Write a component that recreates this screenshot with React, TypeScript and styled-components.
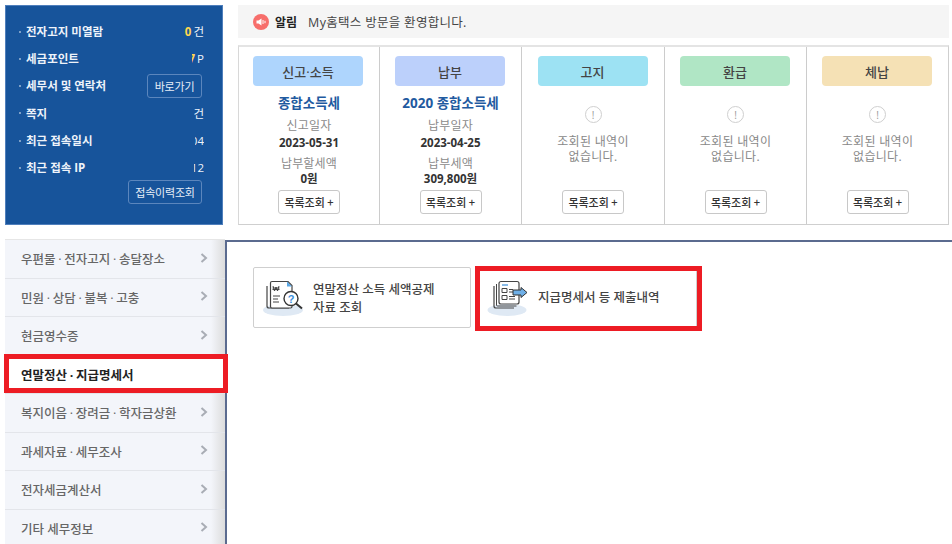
import React from 'react';
import styled, { createGlobalStyle } from 'styled-components';

const FONT = `"Open Sans", "Noto Sans CJK KR", "Noto Sans", sans-serif`;

const Global = createGlobalStyle`
  html, body { margin: 0; padding: 0; background: #fff; overflow: hidden; }
  body { font-family: ${FONT}; font-size: 12px; color: #333; }
  *, *::before, *::after { box-sizing: border-box; }
`;

const Page = styled.div`
  width: 952px; height: 544px; overflow: hidden;
  display: flex; flex-direction: column; gap: 14px; padding: 5px 0 0 5px;
`;
const TopRow = styled.div`display: flex; gap: 15px; height: 221px; flex: none;`;

const InfoPanel = styled.div`
  width: 218px; height: 220px; background: #17549b; border: 1px solid #4f7fbc;
  padding: 12px 14px 0 13px; display: flex; flex-direction: column; color: #eef3fa;
`;
const InfoRow = styled.div`
  height: 27.3px; display: flex; align-items: center; justify-content: space-between;
  font-size: 11.5px; font-weight: 700; line-height: 16px; flex: none;
`;
const InfoLabel = styled.span`
  white-space: nowrap;
  &::before {
    content: ''; display: inline-block; width: 2px; height: 2px; border-radius: 50%;
    background: rgba(255, 255, 255, .6); vertical-align: middle; margin: 0 5px 2px 0;
  }
`;
const InfoValue = styled.span<{ $w: number }>`
  width: ${p => p.$w}px; overflow: hidden; display: flex; justify-content: flex-end;
  white-space: nowrap; font-weight: 400; margin-right: 4px;
`;
const Gold = styled.b`color: #ffd84f; margin-right: 2px;`;
const GhostBtn = styled.button<{ $w: number }>`
  font: 400 11px ${FONT}; color: #e8eef7; background: transparent; letter-spacing: -.2px;
  border: 1px solid #5b86bd; border-radius: 3px; height: 24px; padding: 0;
  width: ${p => p.$w}px; margin-right: 6px; flex: none;
`;
const HistoryRow = styled.div`display: flex; justify-content: flex-end; margin-top: -2px;`;

const RightCol = styled.div`width: 711px; display: flex; flex-direction: column; gap: 7px;`;
const Notice = styled.div`
  height: 33px; background: #f5f5f5; display: flex; align-items: center; padding-left: 15px; gap: 6px;
  font-size: 12.5px; color: #444; letter-spacing: .3px;
`;
const NoticeStrong = styled.b`color: #222; margin-right: 5px; font-size: 12px; letter-spacing: 0;`;

const Tag = styled.div<{ $bg: string }>`
  width: 110px; height: 30px; border-radius: 4px; background: ${p => p.$bg}; margin-right: 1px;
  display: flex; align-items: center; justify-content: center;
  font-size: 13px; font-weight: 500; color: #444; flex: none;
`;
const Cards = styled.div`
  height: 180px; display: grid; grid-template-columns: 140px 142px 143px 142px 1fr;
  border: 1px solid #cfcfcf; border-top: 2px solid #e4e4e4; border-left-color: #d8d8d8;
`;
const Card = styled.div`
  display: flex; flex-direction: column; align-items: center; padding-top: 9px; position: relative;
  & + & { border-left: 1px solid #cccccc; }
  &:first-child ${Tag} { margin-right: 2px; }
`;
const TaxTitle = styled.div`
  font-size: 13.5px; font-weight: 700; color: #1f5aa0; margin-top: 7px; line-height: 20px;
`;
const Caption = styled.div<{ $mt: number }>`
  font-size: 12px; color: #8a8a8a; line-height: 16px; margin-top: ${p => p.$mt}px; letter-spacing: .2px;
`;
const Value = styled.div<{ $mt: number }>`
  font-size: 11.5px; font-weight: 700; color: #333; line-height: 15px; margin-top: ${p => p.$mt}px;
`;
const ListBtn = styled.button`
  position: absolute; left: 50%; transform: translateX(-50%); top: 143px;
  width: 62px; height: 24px; background: #fff; border: 1px solid #c8c8c8; border-radius: 3px; padding: 0;
  font: 500 11px "Noto Sans CJK KR", sans-serif; color: #333; white-space: nowrap;
`;
const EmptyIcon = styled.div`
  width: 17px; height: 17px; border: 1px solid #cfcfcf; border-radius: 50%; margin-top: 20px;
  display: flex; align-items: center; justify-content: center; font-size: 10px; color: #999; line-height: 1; flex: none;
`;
const EmptyText = styled.div`
  font-size: 12px; color: #888; line-height: 15px; text-align: center; margin-top: 11px; letter-spacing: .3px;
`;

const Bottom = styled.div`display: flex; flex: 1; min-height: 0;`;
const Side = styled.div`
  width: 220px; flex: none; display: flex; flex-direction: column; border-top: 1px solid #e6e6e6;
  margin-top: -1px;
  background: linear-gradient(90deg, #f3f5fa 0, #f3f5fa 206px, #dcdcdc 220px);
`;
const SideRow = styled.div<{ $on?: boolean; $tight?: boolean }>`
  height: 38.5px; flex: none; padding-left: 16px; padding-right: 17px; display: flex; align-items: center; justify-content: space-between;
  font-size: 12.5px; font-weight: ${p => (p.$on ? 700 : 500)}; color: ${p => (p.$on ? '#222' : '#666')};
  background: ${p => (p.$on ? '#fff' : 'transparent')};
  word-spacing: ${p => (p.$tight ? '-.5px' : '0')};
  border-bottom: 1px solid #e3e5ea; position: relative; white-space: nowrap;
  ${p => p.$on ? `&::after { content: ''; position: absolute; left: -1px; right: -3px; top: -2px; bottom: 0; border: 5px solid #ed1c24; z-index: 2; }` : ''}
`;
const Chevron = styled.svg`width: 8px; height: 10px; margin-top: -2px; flex: none;`;

const Main = styled.div`
  flex: 1; border-top: 2px solid #5b6b8f; border-left: 2px solid #5b6b8f; background: #fff;
  padding: 25px 0 0 26px; display: flex; gap: 5px; align-items: flex-start;
`;
const LinkCard = styled.div<{ $hl?: boolean }>`
  width: ${p => (p.$hl ? 221 : 218)}px; height: 61px; background: #fff; display: flex; align-items: center; gap: ${p => (p.$hl ? 10 : 8)}px;
  border: 1px solid #cfcfcf; border-radius: 2px; padding-left: 9px; position: relative;
  font-size: 12.5px; font-weight: 500; line-height: 18px; color: #444;
  ${p => p.$hl ? `&::after { content: ''; position: absolute; left: -2px; top: -2px; width: 227px; height: 65px; border: 5px solid #ed1c24; }` : ''}
`;
const TwoLine = styled.span`margin-top: 2px;`;

const cardsData = [
  { tag: '신고·소득', bg: '#aed5fd', title: '종합소득세', c1: '신고일자', v1: '2023-05-31', c2: '납부할세액', v2: '0원' },
  { tag: '납부', bg: '#bcd0fb', title: '2020 종합소득세', c1: '납부일자', v1: '2023-04-25', c2: '납부세액', v2: '309,800원' },
  { tag: '고지', bg: '#9de2f3' },
  { tag: '환급', bg: '#b0e6c5' },
  { tag: '체납', bg: '#f5e1b5' },
];
const menu = ['우편물 · 전자고지 · 송달장소', '민원 · 상담 · 불복 · 고충', '현금영수증', '연말정산 · 지급명세서', '복지이음 · 장려금 · 학자금상환', '과세자료 · 세무조사', '전자세금계산서', '기타 세무정보'];

const Speaker = () => (
  <svg width="16" height="16" viewBox="0 0 16 16">
    <circle cx="8" cy="8" r="8" fill="#f76e6b" />
    <path d="M3.5 6.5h2l3-2v7l-3-2h-2z" fill="#fff" />
    <path d="M10 6v4M12 6.8v2.4" stroke="#fff" strokeWidth="1" />
  </svg>
);
const DocSearch = () => (
  <svg width="42" height="40" viewBox="0 0 42 40" fill="none">
    <ellipse cx="20" cy="32" rx="20" ry="6" fill="#dfe9f4" />
    <path d="M4 8v20a2 2 0 0 0 2 2h20" stroke="#444" strokeWidth="1.2" />
    <path d="M9 3.500h16l4 4v21a1.500 1.500 0 0 1-1.500 1.500H9a1.500 1.500 0 0 1-1.500-1.500V5A1.500 1.500 0 0 1 9 3.500z" fill="#fff" stroke="#444" strokeWidth="1.2" />
    <path d="M24 3.500l5 5h-5z" fill="#5ba7e4" />
    <path d="M10 8l1.500 5 1.500-4 1.500 4L16 8M9.500 10h7M9.500 11.500h7M10 18h7M10 21h5M10 24h6" stroke="#444" strokeWidth="1" />
    <circle cx="28" cy="20.500" r="7" fill="#fff" stroke="#333" strokeWidth="1.400" />
    <path d="M33 25.500l6 5" stroke="#333" strokeWidth="2" />
    <text x="28" y="24.500" fontSize="11" fontWeight="700" textAnchor="middle" fill="#3b8edb" fontFamily="Liberation Sans">?</text>
  </svg>
);
const DocArrow = () => (
  <svg width="42" height="40" viewBox="0 0 42 40" fill="none">
    <ellipse cx="21" cy="32" rx="19.500" ry="6" fill="#dfe9f4" />
    <path d="M8 8v20a2 2 0 0 0 2 2h18" stroke="#444" strokeWidth="1.200" />
    <path d="M10.500 6v21a1 1 0 0 0 1 1h19" stroke="#444" strokeWidth="1" />
    <rect x="13" y="3.500" width="20" height="22.500" rx="2" fill="#fff" stroke="#444" strokeWidth="1.200" />
    <path d="M16 7h6" stroke="#3b8edb" strokeWidth="1.200" />
    <path d="M16 10.500h5v4h-5zM16 17.500h5v4h-5zM23 11.500h4M23 14h4M23 18.500h6M23 21h6" stroke="#444" strokeWidth="1" />
    <path d="M27 12h8V9.500l6 5-6 5V17h-8z" fill="#6fb0e8" stroke="#333" strokeWidth="1" />
  </svg>
);

export default function App() {
  return (
    <Page>
      <Global />
      <TopRow>
        <InfoPanel>
          <InfoRow><InfoLabel>전자고지 미열람</InfoLabel><InfoValue $w={40}><Gold>0</Gold>건</InfoValue></InfoRow>
          <InfoRow><InfoLabel>세금포인트</InfoLabel><InfoValue $w={12}><Gold>7</Gold>P</InfoValue></InfoRow>
          <InfoRow><InfoLabel>세무서 및 연락처</InfoLabel><GhostBtn $w={55}>바로가기</GhostBtn></InfoRow>
          <InfoRow><InfoLabel>쪽지</InfoLabel><InfoValue $w={10}>건</InfoValue></InfoRow>
          <InfoRow><InfoLabel>최근 접속일시</InfoLabel><InfoValue $w={9}>04</InfoValue></InfoRow>
          <InfoRow><InfoLabel>최근 접속 IP</InfoLabel><InfoValue $w={10}>12</InfoValue></InfoRow>
          <HistoryRow><GhostBtn $w={74}>접속이력조회</GhostBtn></HistoryRow>
        </InfoPanel>
        <RightCol>
          <Notice><Speaker /><NoticeStrong>알림</NoticeStrong>My홈택스 방문을 환영합니다.</Notice>
          <Cards>
            {cardsData.map(c => (
              <Card key={c.tag}>
                <Tag $bg={c.bg}>{c.tag}</Tag>
                {c.title ? (
                  <>
                    <TaxTitle>{c.title}</TaxTitle>
                    <Caption $mt={5}>{c.c1}</Caption>
                    <Value $mt={1}>{c.v1}</Value>
                    <Caption $mt={6}>{c.c2}</Caption>
                    <Value $mt={-1}>{c.v2}</Value>
                  </>
                ) : (
                  <>
                    <EmptyIcon>!</EmptyIcon>
                    <EmptyText>조회된 내역이<br />없습니다.</EmptyText>
                  </>
                )}
                <ListBtn>목록조회 +</ListBtn>
              </Card>
            ))}
          </Cards>
        </RightCol>
      </TopRow>
      <Bottom>
        <Side>
          {menu.map((m, i) => (
            <SideRow key={m} $on={i === 3} $tight={m.includes('·')}>
              {m}
              {i !== 3 && (
                <Chevron viewBox="0 0 8 10"><path d="M1.500 1l4.500 4-4.500 4" fill="none" stroke="#a9adb5" strokeWidth="2" /></Chevron>
              )}
            </SideRow>
          ))}
        </Side>
        <Main>
          <LinkCard><DocSearch /><TwoLine>연말정산 소득 세액공제<br />자료 조회</TwoLine></LinkCard>
          <LinkCard $hl><DocArrow /><span>지급명세서 등 제출내역</span></LinkCard>
        </Main>
      </Bottom>
    </Page>
  );
}
